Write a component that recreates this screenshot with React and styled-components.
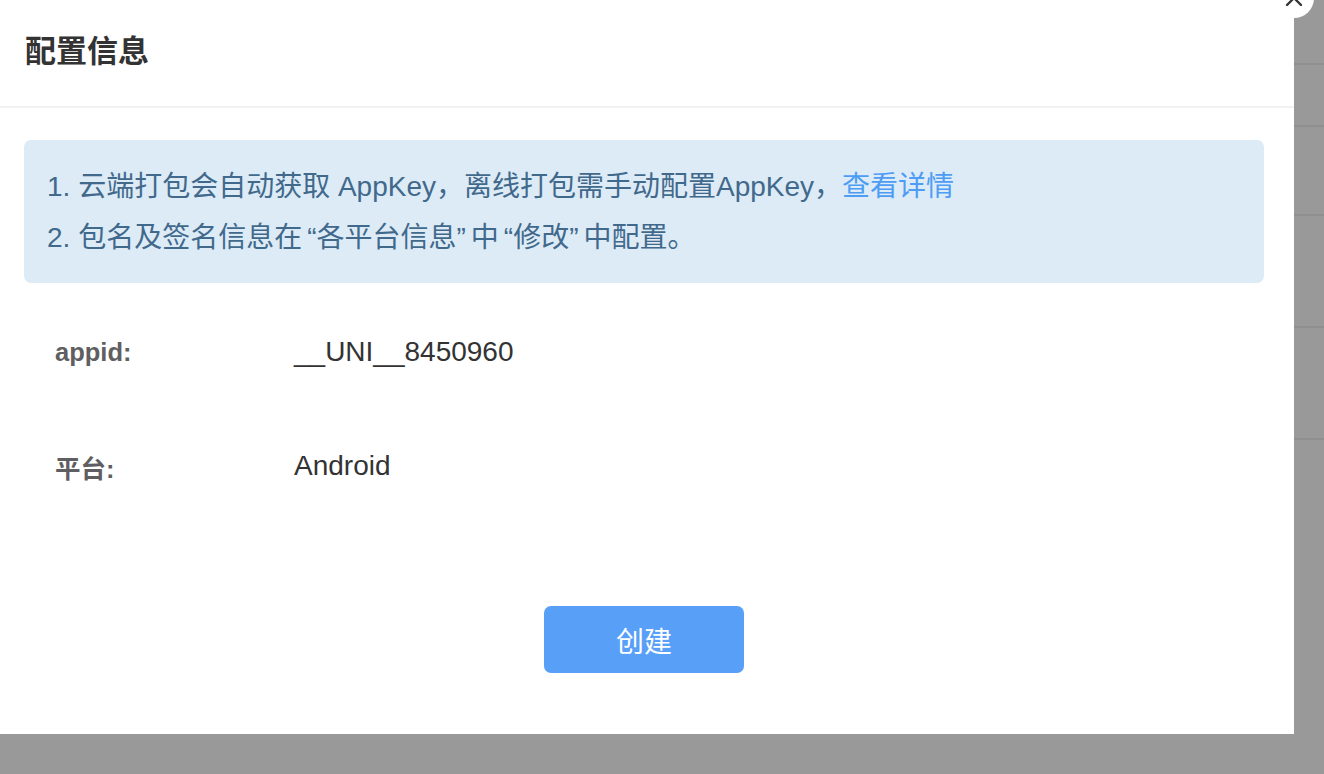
import React from 'react'
import styled, { createGlobalStyle } from 'styled-components'

const GlobalStyle = createGlobalStyle`
    html, body {
        margin: 0;
        padding: 0;
        background: #999999;
        font-family: "Liberation Sans", "Noto Sans CJK SC", sans-serif;
        overflow: hidden;
    }
`

const FONT = `"Liberation Sans", "Noto Sans CJK SC", sans-serif`

const Backdrop = styled.div`
    width: 100vw;
    height: 100vh;
    background: #999999;
    display: flex;
    flex-direction: column;
    overflow: hidden;
`

const BackRow = styled.div`
    height: ${props => props.h}px;
    flex-shrink: 0;
    border-bottom: 2px solid #8f8f8f;
`

const Dialog = styled.div`
    position: fixed;
    left: 0;
    top: 0;
    width: 1294px;
    height: 734px;
    background: #ffffff;
    display: flex;
    flex-direction: column;
    font-family: ${FONT};
`

const CloseBtn = styled.button`
    position: fixed;
    left: 1274px;
    top: -22px;
    width: 40px;
    height: 40px;
    border-radius: 50%;
    border: none;
    background: #ffffff;
    padding: 0;
    display: flex;
    align-items: center;
    justify-content: center;
    color: #333333;
`

const Header = styled.div`
    height: 106px;
    border-bottom: 2px solid #f2f2f2;
    display: flex;
    align-items: center;
    padding-left: 25px;
`

const Title = styled.h2`
    margin: 0;
    font-size: 31px;
    font-weight: bold;
    color: #333333;
    line-height: 1;
    padding-bottom: 4px;
`

const Body = styled.div`
    padding: 32px 30px 0 24px;
    display: flex;
    flex-direction: column;
`

const Notice = styled.div`
    height: 143px;
    box-sizing: border-box;
    background: #ddebf7;
    border-radius: 7px;
    padding: 21px 0 0 23px;
    color: #41698c;
    font-size: 28px;
    line-height: 51px;
`

const NoticeLine = styled.div`
    white-space: nowrap;
`

const Quote = styled.span`
    margin-left: ${props => (props.open ? 5 : 0)}px;
    margin-right: ${props => (props.open ? 0 : 5)}px;
`

const Link = styled.a`
    color: #4d9df5;
    text-decoration: none;
`

const InfoList = styled.div`
    padding: 12px 0 0 31px;
    display: flex;
    flex-direction: column;
`

const InfoRow = styled.div`
    height: 114px;
    display: flex;
    align-items: center;
`

const Label = styled.span`
    width: 239px;
    flex-shrink: 0;
    font-size: 25.5px;
    font-weight: bold;
    color: #5f5f62;
`

const Value = styled.span`
    font-size: 28px;
    color: #333333;
`

const Footer = styled.div`
    display: flex;
    justify-content: center;
    padding-top: 83px;
`

const PrimaryButton = styled.button`
    width: 200px;
    height: 67px;
    border: none;
    border-radius: 7px;
    background: #589ff8;
    color: #ffffff;
    font-family: ${FONT};
    font-size: 28px;
    cursor: pointer;
`

const backRows = [63, 60, 87, 110, 110]

function CloseIcon() {
    return (
        <svg width="18" height="18" viewBox="0 0 18 18" fill="none" stroke="#333" strokeWidth="2.4" strokeLinecap="round">
            <path d="M2 2 L16 16 M16 2 L2 16" />
        </svg>
    )
}

function App() {
    return (
        <>
            <GlobalStyle />
            <Backdrop>
                {backRows.map((h, i) => <BackRow key={i} h={h} />)}
            </Backdrop>
            <Dialog>
                <Header>
                    <Title>配置信息</Title>
                </Header>
                <Body>
                    <Notice>
                        <NoticeLine>
                            1. 云端打包会自动获取 AppKey，离线打包需手动配置AppKey，<Link href="#">查看详情</Link>
                        </NoticeLine>
                        <NoticeLine>
                            2. 包名及签名信息在<Quote open>“</Quote>各平台信息<Quote>”</Quote>中<Quote open>“</Quote>修改<Quote>”</Quote>中配置。
                        </NoticeLine>
                    </Notice>
                    <InfoList>
                        <InfoRow>
                            <Label>appid:</Label>
                            <Value>__UNI__8450960</Value>
                        </InfoRow>
                        <InfoRow>
                            <Label>平台:</Label>
                            <Value>Android</Value>
                        </InfoRow>
                    </InfoList>
                    <Footer>
                        <PrimaryButton>创建</PrimaryButton>
                    </Footer>
                </Body>
            </Dialog>
            <CloseBtn aria-label="close">
                <CloseIcon />
            </CloseBtn>
        </>
    )
}

export default App
